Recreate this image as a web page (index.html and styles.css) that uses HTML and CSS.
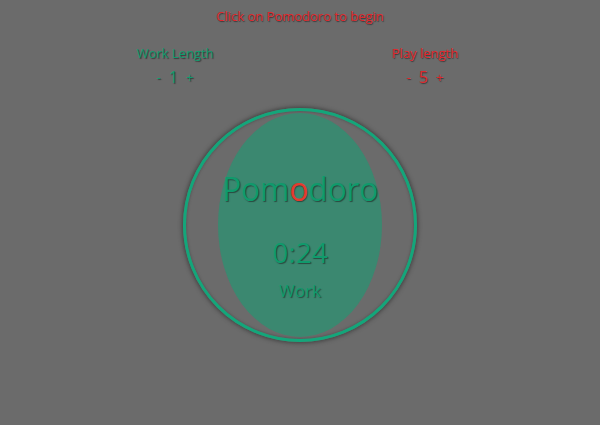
FILE: index.html
```html
<!DOCTYPE html>
<html>
<head>
<meta charset="utf-8">
<link rel="stylesheet" href="styles.css">
</head>
<body>
<div class="page">
  <p class="hint">Click on Pomodoro to begin</p>
  <div class="settings">
    <div class="setting work">
      <div class="setting-label">Work Length</div>
      <div class="setting-ctrl"><span class="btn">-</span><span class="val">1</span><span class="btn">+</span></div>
    </div>
    <div class="setting play">
      <div class="setting-label">Play length</div>
      <div class="setting-ctrl"><span class="btn">-</span><span class="val">5</span><span class="btn">+</span></div>
    </div>
  </div>
  <div class="clock">
    <div class="ring"></div>
    <div class="fill">
      <div class="title">Pom<span class="red">o</span>doro</div>
      <div class="time">0:24</div>
      <div class="mode">Work</div>
    </div>
  </div>
</div>
</body>
</html>
```
FILE: styles.css
```css
html, body {
  margin: 0;
  padding: 0;
  background: #6b6b6b;
  font-family: "Open Sans", "Noto Sans", sans-serif;
}
.page {
  width: 600px;
  height: 425px;
  display: flex;
  flex-direction: column;
  align-items: center;
}
.hint {
  margin: 7px 0 0;
  font-size: 13px;
  line-height: 18px;
  color: #e0282c;
  text-shadow: 1px 1px 1px #3a3a3a;
}
.settings {
  display: flex;
  gap: 100px;
  margin-top: 19px;
}
.setting {
  width: 150px;
  display: flex;
  flex-direction: column;
  align-items: center;
  font-size: 13px;
}
.work { color: #119b6e; }
.play { color: #e0282c; }
.setting-label {
  line-height: 18px;
  text-shadow: 1px 1px 1px #3a3a3a;
}
.setting-ctrl {
  margin-top: 6px;
  display: flex;
  gap: 8px;
  align-items: center;
  line-height: 18px;
  text-shadow: 1px 1px 1px #3a3a3a;
}
.val { font-size: 16px; }
.btn { font-size: 13px; }
.clock {
  position: relative;
  width: 600px;
  height: 236px;
  margin-top: 22px;
}
.ring {
  width: 228px;
  height: 228px;
  margin: 0 auto;
  border: 3px solid #13a67a;
  border-radius: 50%;
  box-shadow: 0 0 4px 1px #3f3f3f, inset 0 0 3px #4a4a4a;
}
.fill {
  position: absolute;
  left: 218px;
  top: 5px;
  width: 164px;
  height: 224px;
  border-radius: 50%;
  background: #3b8870;
  display: flex;
  flex-direction: column;
  align-items: center;
  color: #109a6c;
  text-shadow: 1px 1px 1px #2b4a40;
}
.title {
  margin-top: 56px;
  font-size: 32px;
  line-height: 40px;
  letter-spacing: -0.3px;
  white-space: nowrap;
}
.red { color: #e53a2e; }
.time {
  margin-top: 25px;
  font-size: 28px;
  line-height: 36px;
}
.mode {
  margin-top: 9px;
  font-size: 17px;
  line-height: 24px;
}
```
